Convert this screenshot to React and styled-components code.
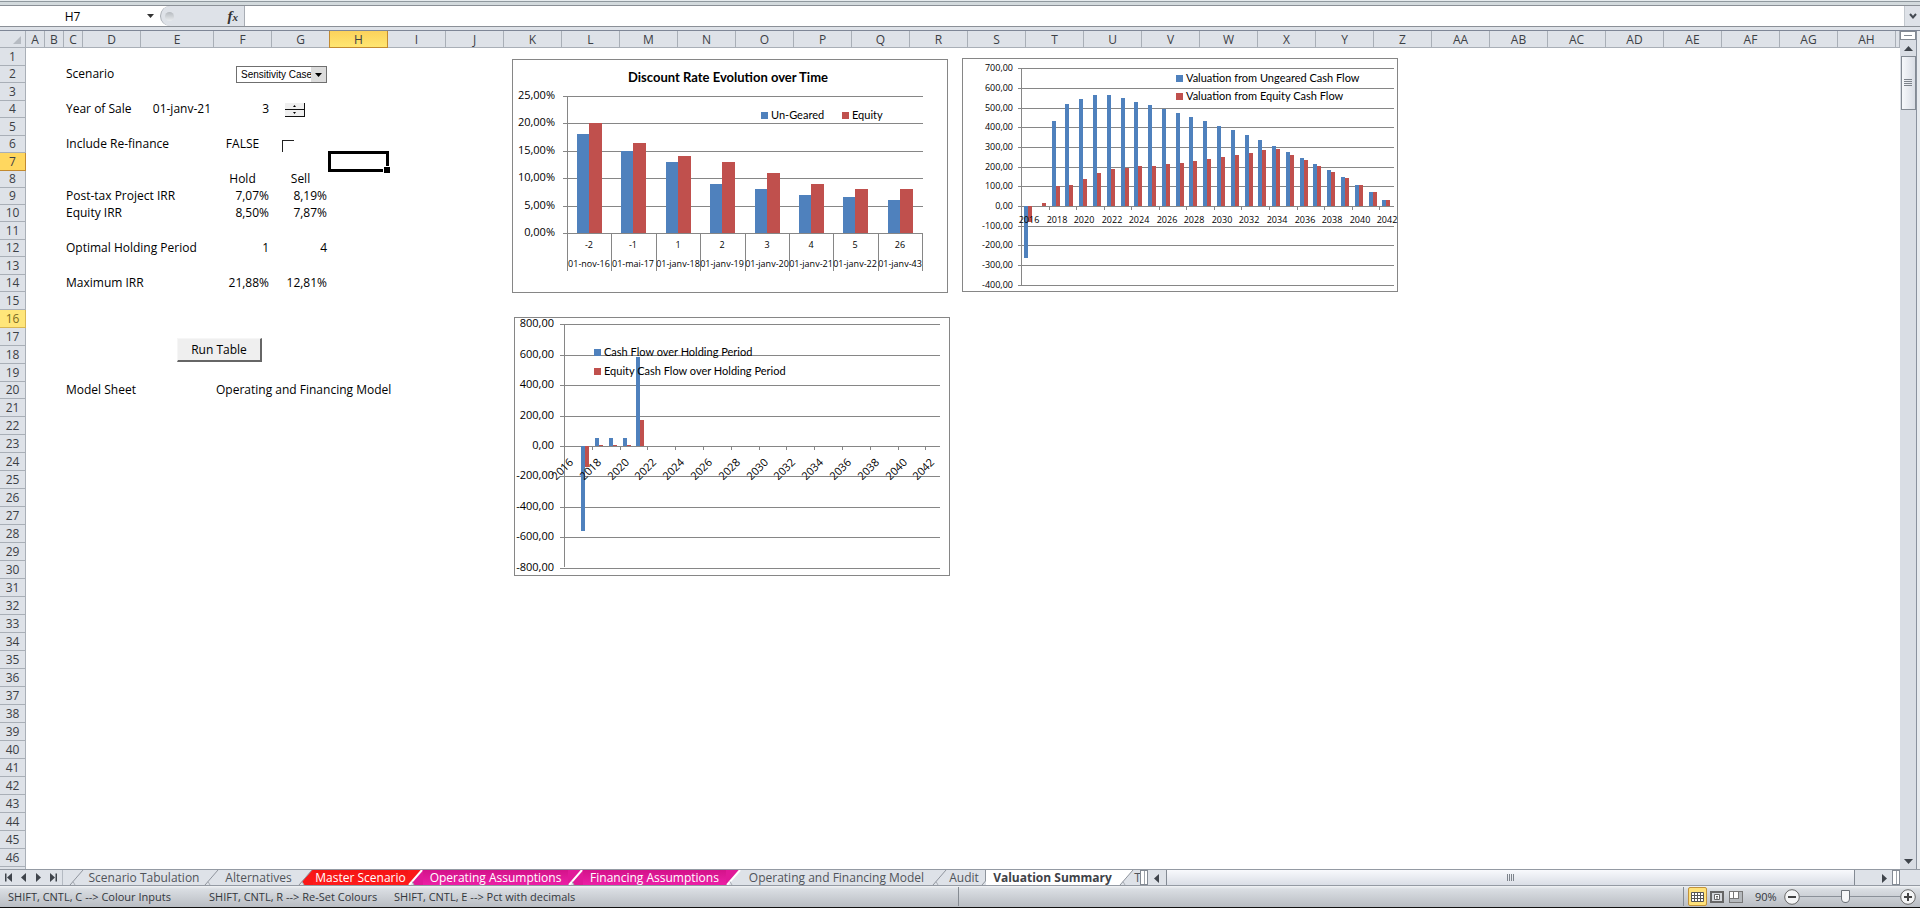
import styled, { createGlobalStyle, css } from "styled-components";

const GlobalStyle = createGlobalStyle`
  * {
    box-sizing: border-box;
  }

  body {
    margin: 0;
    background: #dee2e8;
    color: #000;
    font-family: "Open Sans", "Noto Sans", sans-serif;
    font-size: 12px;
  }

  button, input, select {
    font: inherit;
    color: inherit;
    margin: 0;
    padding: 0;
    border: 0;
    border-radius: 0;
    background: none;
  }
`;

const Page = styled.div`
  display: flex;
  flex-direction: column;
  height: 100vh;
  overflow: hidden;
`;

const RibbonEdge = styled.div`
  height: 5px;
  flex: none;
  background: linear-gradient(#e6ebee 0 1px, #8f989e 1px 2px, #d3dadd 2px);
`;

const FormulaBar = styled.div`
  display: flex;
  flex: none;
  height: 22px;
  border-top: 1px solid #8b9097;
  border-bottom: 1px solid #8b9097;
  background: #fff;
`;

const NameBox = styled.div`
  display: flex;
  align-items: center;
  width: 160px;
  padding-right: 5px;
`;

const NameInput = styled.input`
  flex: 1;
  min-width: 0;
  text-align: center;
  outline: none;
`;

const NameButton = styled.button`
  display: flex;
  align-items: center;
  justify-content: center;
  width: 10px;
`;

const FxArea = styled.div`
  display: flex;
  align-items: center;
  justify-content: space-between;
  width: 85px;
  padding: 0 6px 0 4px;
  border: 1px solid #a8adb4;
  border-width: 0 1px;
  border-radius: 11px 0 0 11px;
  background: #dee2e8;
`;

const Knob = styled.span`
  width: 9px;
  height: 9px;
  border-radius: 50%;
  background: linear-gradient(#b5babf, #e9ecef);
`;

const FxButton = styled.button`
  font-family: "Liberation Serif", serif;
  font-size: 15px;
  font-style: italic;
  font-weight: bold;
  line-height: 16px;
  color: #333;

  small {
    font-size: 11px;
  }
`;

const FormulaInput = styled.input`
  flex: 1;
  min-width: 0;
  padding: 0 4px;
  outline: none;
`;

const ExpandButton = styled.button`
  display: flex;
  align-items: center;
  justify-content: center;
  width: 16px;
  border-left: 1px solid #c3c8ce;
  background: #dee2e8;
`;

const Workspace = styled.div`
  display: flex;
  flex: 1;
  min-height: 0;
  margin-top: 3px;
  border-top: 1px solid #7e8696;
`;

const Viewport = styled.main`
  position: relative;
  flex: 1;
  min-width: 0;
  overflow: hidden;
  background: #fff;
`;

const Grid = styled.table`
  width: 100%;
  table-layout: fixed;
  border-collapse: separate;
  border-spacing: 0;
`;

const headerCell = css`
  padding: 0;
  font-weight: normal;
  color: #3c4045;
  background: #dee2e8;
  border: 0 solid #a9afb7;
`;

const ColHead = styled.th`
  ${headerCell}
  height: 17px;
  padding-top: 2px;
  line-height: 14px;
  border-width: 0 1px 1px 0;
  overflow: hidden;
  ${(p) =>
    p.$active &&
    css`
      background: linear-gradient(#fbd25b, #ffe671);
      border-color: #c28a30;
      box-shadow: -1px 0 #c28a30;
    `}
`;

const RowHead = styled.th`
  ${headerCell}
  line-height: 16px;
  border-width: 0 1px 1px 0;
  ${(p) =>
    p.$tone === "active" &&
    css`
      background: #ffd75f;
      border-color: #c28a30;
    `}
  ${(p) =>
    p.$tone === "hover" &&
    css`
      color: #7c6a22;
      background: #ffe67a;
      border-color: #d8b653;
    `}
`;

const Row = styled.tr`
  height: ${(p) => p.$height}px;
`;

const Cell = styled.td`
  padding: 0 3px 0 2px;
  line-height: 16px;
  vertical-align: top;
  white-space: nowrap;
  overflow: visible;
  text-align: ${(p) => p.$align || "left"};
`;

const ControlCell = styled(Cell)`
  padding: ${(p) => p.$pad};
  line-height: 0;
`;

const SelectWrap = styled.span`
  position: relative;
  display: inline-block;
  width: 91px;
  height: 17px;

  svg {
    position: absolute;
    top: 1px;
    right: 1px;
    pointer-events: none;
  }
`;

const ScenarioSelect = styled.select`
  appearance: none;
  width: 100%;
  height: 17px;
  padding-left: 4px;
  border: 1px solid #6f6f6f;
  background: #fff;
  font-family: "Liberation Sans", sans-serif;
  font-size: 10px;
  line-height: 14px;
`;

const Spinner = styled.span`
  display: inline-flex;
  flex-direction: column;
  width: 20px;
  border-right: 1px solid #111;
`;

const SpinButton = styled.button`
  display: flex;
  align-items: center;
  justify-content: center;
  height: 7px;
  border-bottom: 1px solid #111;
  background: #efefef;
`;

const Check = styled.input`
  appearance: none;
  width: 12px;
  height: 12px;
  border: solid #222;
  border-width: 1px 0 0 1px;
  background: #fff;
`;

// objects the user dropped on the sheet, above the cells
const Floating = styled.div`
  position: absolute;
  left: ${(p) => p.$x}px;
  top: ${(p) => p.$y}px;
  line-height: 0;
`;

const RunButton = styled.button`
  width: 85px;
  height: 24px;
  line-height: 20px;
  background: #efefef;
  border: 1px solid #f6f6f6;
  border-right: 2px solid #666;
  border-bottom: 2px solid #666;
`;

const Selection = styled.div`
  position: absolute;
  left: 328px;
  top: 120px;
  width: 61px;
  height: 21px;
  border: 3px solid #000;

  &::after {
    content: "";
    position: absolute;
    right: -4px;
    bottom: -4px;
    width: 6px;
    height: 6px;
    background: #000;
    border: solid #fff;
    border-width: 1px 0 0 1px;
  }
`;

const ChartText = styled.text`
  font-family: "Open Sans", sans-serif;
  font-size: ${(p) => p.$size || 11}px;
  text-anchor: ${(p) => p.$anchor || "start"};
  fill: #000;
`;

const ChartTitle = styled.text`
  font-family: Lato, sans-serif;
  font-size: 13px;
  font-weight: 700;
  text-anchor: middle;
`;

const LegendText = styled.text`
  font-family: Lato, sans-serif;
  font-size: 11px;
`;

const ScrollColumn = styled.div`
  display: flex;
  flex-direction: column;
  align-items: center;
  width: 20px;
  border-right: 3px solid #e8ebef;
  background: #d9dde4;
  box-shadow: inset -1px 0 #8b929e;
`;

const SplitHandle = styled.div`
  width: 16px;
  height: 9px;
  margin-right: 1px;
  border: 1px solid #838a93;
  background: linear-gradient(#fff 0 3px, #838a93 3px 4px, #fff 4px) center / 8px 100% no-repeat #fff;
`;

const ArrowButton = styled.button`
  display: flex;
  align-items: center;
  justify-content: center;
  width: 16px;
  height: 16px;
`;

const VerticalThumb = styled.div`
  display: flex;
  align-items: center;
  justify-content: center;
  width: 15px;
  height: 54px;
  margin-right: 1px;
  border: 1px solid #838a93;
  background: linear-gradient(90deg, #f6f8fb, #d9dde5);
`;

const Spacer = styled.div`
  flex: 1;
`;

const TabStrip = styled.div`
  display: flex;
  flex: none;
  height: 17px;
  border-top: 1px solid #949aa3;
  border-bottom: 1px solid #949aa3;
  background: #dee2e8;
`;

const SheetNav = styled.div`
  display: flex;
  align-items: center;
  justify-content: space-between;
  width: 63px;
  padding: 0 4px;
  border-right: 1px solid #b4bac2;
`;

const NavButton = styled.button`
  display: flex;
  justify-content: center;
  width: 11px;
`;

const Tabs = styled.div`
  display: flex;
  width: 1077px;
  padding-left: 6px;
  overflow: hidden;
`;

const Tab = styled.button`
  flex: none;
  width: ${(p) => p.$width}px;
  line-height: 15px;
  white-space: nowrap;
  color: ${(p) => (p.$fill ? "#fff" : "#50545a")};
  background: ${(p) => (p.$fill ? p.$fill : "#dee2e8")};
  ${(p) =>
    p.$current &&
    css`
      font-weight: bold;
      color: #3e4247;
      background: #fff;
    `}
`;

const SlantSvg = styled.svg`
  flex: none;
`;

const TabSplit = styled.div`
  width: 8px;
  border: 1px solid #838a93;
  background: linear-gradient(90deg, #fff 0 3px, #a0a5ac 3px 4px, #fff 4px);
`;

const HorizontalThumb = styled.div`
  display: flex;
  flex: 1;
  align-items: center;
  justify-content: center;
  margin-left: 2px;
  border: 1px solid #838a93;
  border-width: 0 1px;
  background: linear-gradient(#f8f9fc, #dadee6);
`;

const ScrollGap = styled.div`
  width: ${(p) => p.$width}px;
`;

const StatusBar = styled.footer`
  display: flex;
  flex: none;
  align-items: center;
  height: 22px;
  padding: 0 4px 0 8px;
  font-size: 11px;
  color: #33373c;
  background: linear-gradient(#f1f3f5, #dadee3 3px, #b9bdc3);
  border-bottom: 1px solid #111;
`;

const Hint = styled.span`
  width: ${(p) => p.$width}px;
  white-space: nowrap;
`;

const Divider = styled.span`
  align-self: stretch;
  width: 1px;
  margin: 1px 0;
  background: #858b92;
`;

const ViewButton = styled.button`
  display: flex;
  align-items: center;
  justify-content: center;
  width: 19px;
  height: 19px;
  ${(p) =>
    p.$on &&
    css`
      border: 1px solid #c2923b;
      border-radius: 2px;
      background: #ffe27a;
    `}
`;

const Zoom = styled.div`
  display: flex;
  align-items: center;
  padding-left: 10px;
`;

const ZoomLabel = styled.label`
  width: 29px;
  line-height: 16px;
`;

const RoundButton = styled.button`
  display: flex;
  line-height: 0;
`;

const ZoomSlider = styled.input`
  appearance: none;
  width: 100px;
  height: 16px;
  background: linear-gradient(#8b9199, #8b9199) center / 100% 1px no-repeat;

  &::-webkit-slider-thumb {
    appearance: none;
    width: 9px;
    height: 13px;
    border: 1px solid #6a7077;
    border-radius: 1px 1px 5px 5px;
    background: #f6f7f8;
  }
`;

const AXIS = "#868686";
const BLUE = "#4f81bd";
const RED = "#c0504d";

const COLUMNS = [
  ["A", 19], ["B", 19], ["C", 19], ["D", 58], ["E", 73],
  ..."FGHIJKLMNOPQRSTUVWXYZ".split("").map((c) => [c, 58]),
  ..."ABCDEFGH".split("").map((c) => ["A" + c, 58]),
];

const SHORT_ROWS = [2, 4, 6, 8, 9, 10, 12, 14, 20];

const label = (text) => <Cell colSpan={3}>{text}</Cell>;
const right = (text) => <Cell $align="right">{text}</Cell>;
const center = (text) => <Cell $align="center">{text}</Cell>;
const blank = <Cell colSpan={2} />;

function numbers(text, f, g) {
  return (
    <>
      {blank}
      {label(text)}
      {f}
      {g}
    </>
  );
}

const ROWS = {
  2: (
    <>
      {blank}
      {label("Scenario")}
      <ControlCell colSpan={2} $align="right" $pad="0 3px 0 0">
        <SelectWrap>
          <ScenarioSelect aria-label="Scenario" defaultValue="s">
            <option value="s">Sensitivity Case</option>
          </ScenarioSelect>
          <svg width="15" height="15">
            <rect width="15" height="15" fill="#dcdcdc" />
            <path d="M4 6h7L7.500 10z" fill="#000" />
          </svg>
        </SelectWrap>
      </ControlCell>
    </>
  ),
  4: (
    <>
      {blank}
      <Cell colSpan={2}>Year of Sale</Cell>
      {right("01-janv-21")}
      {right("3")}
      <ControlCell $pad="2px 0 0 13px">
        <Spinner>
          <SpinButton aria-label="Later year"><svg width="3" height="2"><path d="M0 2L1.500 0L3 2z" /></svg></SpinButton>
          <SpinButton aria-label="Earlier year"><svg width="3" height="2"><path d="M0 0h3L1.500 2z" /></svg></SpinButton>
        </Spinner>
      </ControlCell>
    </>
  ),
  6: numbers(
    "Include Re-finance",
    center("FALSE"),
    <ControlCell $pad="4px 0 0 10px">
      <Check type="checkbox" aria-label="Include Re-finance" />
    </ControlCell>
  ),
  8: numbers("", center("Hold"), center("Sell")),
  9: numbers("Post-tax Project IRR", right("7,07%"), right("8,19%")),
  10: numbers("Equity IRR", right("8,50%"), right("7,87%")),
  12: numbers("Optimal Holding Period", right("1"), right("4")),
  14: numbers("Maximum IRR", right("21,88%"), right("12,81%")),
  20: (
    <>
      {blank}
      {label("Model Sheet")}
      <Cell colSpan={3}>Operating and Financing Model</Cell>
    </>
  ),
};

function Legend({ x, y, color, children }) {
  return (
    <>
      <rect x={x} y={y - 7} width="7" height="7" fill={color} />
      <LegendText x={x + 10} y={y}>{children}</LegendText>
    </>
  );
}

function DiscountChart() {
  const ungeared = [18, 15, 13, 9, 8, 7, 6.5, 6];
  const equity = [20, 16.5, 14, 13, 11, 9, 8, 8];
  const periods = ["-2", "-1", "1", "2", "3", "4", "5", "26"];
  const dates = ["01-nov-16", "01-mai-17", "01-janv-18", "01-janv-19", "01-janv-20", "01-janv-21", "01-janv-22", "01-janv-43"];
  const left = 55;
  const step = 44.4;
  const y = (v) => Math.round(174 - v * 5.48);
  return (
    <svg width="436" height="234" role="img" aria-label="Discount Rate Evolution over Time" shapeRendering="crispEdges">
      <rect x="0.5" y="0.5" width="435" height="233" fill="#fff" stroke={AXIS} />
      <ChartTitle x="216" y="23">Discount Rate Evolution over Time</ChartTitle>
      {[0, 5, 10, 15, 20, 25].map((v) => (
        <g key={v}>
          <path d={`M${left - 4} ${y(v) + 0.5}H411`} stroke={AXIS} />
          <ChartText x="43" y={y(v) + 3} $size={11} $anchor="end">{v},00%</ChartText>
        </g>
      ))}
      {periods.map((p, i) => {
        const x = Math.round(left + i * step);
        return (
          <g key={p}>
            <rect x={x + 10} y={y(ungeared[i])} width="12" height={174 - y(ungeared[i])} fill={BLUE} />
            <rect x={x + 22} y={y(equity[i])} width="13" height={174 - y(equity[i])} fill={RED} />
            <path d={`M${x + 0.5} 174V212`} stroke={AXIS} />
            <ChartText x={x + 22} y="189" $size={9} $anchor="middle">{p}</ChartText>
            <ChartText x={x + 22} y="208" $size={9} $anchor="middle">{dates[i]}</ChartText>
          </g>
        );
      })}
      <path d={`M${left + 0.5} 37V174M410.500 174V212`} stroke={AXIS} />
      <Legend x={249} y={60} color={BLUE}>Un-Geared</Legend>
      <Legend x={330} y={60} color={RED}>Equity</Legend>
    </svg>
  );
}

// paired bars for 2016-2042, shared by both cash charts
function YearBars({ left, step, zero, scale, first, second }) {
  const bar = (v, x, color) => {
    const h = Math.round(Math.abs(v) * scale);
    return <rect x={Math.round(x)} y={v < 0 ? zero : zero - h} width="4" height={h} fill={color} />;
  };
  return first.map((v, i) => (
    <g key={i}>
      {bar(v, left + i * step + 2.4, BLUE)}
      {bar(second[i] || 0, left + i * step + 6.4, RED)}
    </g>
  ));
}

const YEARS = Array.from({ length: 14 }, (_, i) => 2016 + i * 2);

function ValuationChart() {
  const ungeared = [-262, 0, 433, 519, 545, 565, 565, 550, 530, 514, 494, 474, 453, 433, 408, 387, 362, 337, 306, 276, 245, 215, 184, 149, 108, 73, 32];
  const equity = [-83, 17, 100, 108, 139, 169, 190, 193, 203, 205, 215, 220, 230, 240, 250, 260, 271, 286, 291, 260, 235, 205, 174, 144, 108, 73, 32];
  const ticks = [7, 6, 5, 4, 3, 2, 1, 0, -1, -2, -3, -4];
  return (
    <svg width="436" height="234" role="img" aria-label="Valuation" shapeRendering="crispEdges">
      <rect x="0.5" y="0.5" width="435" height="233" fill="#fff" stroke={AXIS} />
      {ticks.map((t) => {
        const y = Math.round(148 - t * 19.7);
        return (
          <g key={t}>
            <path d={`M56 ${y + 0.5}H432`} stroke={AXIS} />
            <ChartText x="51" y={y + 3} $size={9} $anchor="end">{t ? t + "00,00" : "0,00"}</ChartText>
          </g>
        );
      })}
      <path d="M59.500 10V227" stroke={AXIS} />
      <YearBars left={59.7} step={13.78} zero={148} scale={0.197} first={ungeared} second={equity} />
      {YEARS.map((year, i) => (
        <g key={year}>
          <path d={`M${Math.round(60 + i * 27.56) - 0.5} 148v4`} stroke={AXIS} />
          <ChartText x={Math.round(67 + i * 27.56)} y="165" $size={9} $anchor="middle">{year}</ChartText>
        </g>
      ))}
      <Legend x={214} y={24} color={BLUE}>Valuation from Ungeared Cash Flow</Legend>
      <Legend x={214} y={42} color={RED}>Valuation from Equity Cash Flow</Legend>
    </svg>
  );
}

function CashFlowChart() {
  const cash = [0, -557, 53, 53, 53, 585];
  const equity = [0, -140, 8, 8, 8, 171];
  const ticks = [8, 6, 4, 2, 0, -2, -4, -6, -8];
  return (
    <svg width="436" height="259" role="img" aria-label="Cash flow over holding period" shapeRendering="crispEdges">
      <rect x="0.5" y="0.5" width="435" height="258" fill="#fff" stroke={AXIS} />
      {ticks.map((t) => {
        const y = Math.round(129 - t * 15.2);
        return (
          <g key={t}>
            <path d={`M46 ${y + 0.5}H426`} stroke={AXIS} />
            <ChartText x="40" y={y + 3} $size={11} $anchor="end">{t ? t + "00,00" : "0,00"}</ChartText>
          </g>
        );
      })}
      <path d="M50.500 7V250" stroke={AXIS} />
      <YearBars left={50.5} step={13.9} zero={129} scale={0.152} first={cash} second={equity} />
      {YEARS.map((year, i) => {
        const x = Math.round(51 + i * 27.8);
        return (
          <g key={year}>
            <path d={`M${x - 0.5} 129v4`} stroke={AXIS} />
            <ChartText transform={`translate(${x + 9} 146) rotate(-45)`} $size={11} $anchor="end">{year}</ChartText>
          </g>
        );
      })}
      <Legend x={80} y={39} color={BLUE}>Cash Flow over Holding Period</Legend>
      <Legend x={80} y={58} color={RED}>Equity Cash Flow over Holding Period</Legend>
    </svg>
  );
}

function Arrow({ dir, bar }) {
  const turn = { up: 0, right: 90, down: 180, left: 270 }[dir];
  return (
    <svg width="11" height="11" viewBox="0 0 11 11">
      <g transform={`rotate(${turn} 5.500 5.500)`} fill="#3f444b">
        <path d="M1 8L5.500 3L10 8z" />
        {bar && <rect x="1.500" y="1" width="8" height="1.500" />}
      </g>
    </svg>
  );
}

const PINK = "linear-gradient(#d3138a, #ec1fa6)";
const SCARLET = "linear-gradient(#f41414, #ff1c1c)";

const TABS = [
  { name: "Scenario Tabulation", width: 120 },
  { name: "Alternatives", width: 79 },
  { name: "Master Scenario", width: 95, fill: SCARLET, flat: "#fa1818" },
  { name: "Operating Assumptions", width: 145, fill: PINK, flat: "#e01998" },
  { name: "Financing Assumptions", width: 143, fill: PINK, flat: "#e01998" },
  { name: "Operating and Financing Model", width: 191 },
  { name: "Audit", width: 34 },
  { name: "Valuation Summary", width: 133, flat: "#fff", current: true },
];

function Slant({ from = "#dee2e8", to = "#dee2e8" }) {
  const tinted = from !== "#dee2e8" && from !== "#fff";
  // the open sheet's tab lies in front, so its left edge is upright
  if (to === "#fff") {
    return (
      <SlantSvg width="5" height="15" viewBox="0 0 5 15" aria-hidden="true">
        <path d="M4.500 0V11L1 15" fill="none" stroke="#8f959d" />
      </SlantSvg>
    );
  }
  return (
    <SlantSvg width="15" height="15" viewBox="0 0 15 15" aria-hidden="true">
      <path d="M0 0H14L1 15H0z" fill={from} />
      <path d="M15 0H14L1 15H15z" fill={to} />
      <path d="M4 11.500L6 15H1z" fill="#dee2e8" />
      <path d="M14 0L1 15" stroke={tinted ? "#fff" : "#8f959d"} strokeWidth={tinted ? 2 : 1} />
      <path d="M4 11.500L6 15" stroke="#a9aeb5" />
    </SlantSvg>
  );
}

export default function App() {
  return (
    <Page>
      <GlobalStyle />
      <RibbonEdge />
      <FormulaBar>
        <NameBox>
          <NameInput aria-label="Name box" defaultValue="H7" />
          <NameButton aria-label="Names">
            <svg width="7" height="4"><path d="M0 0h7L3.500 4z" fill="#333" /></svg>
          </NameButton>
        </NameBox>
        <FxArea>
          <Knob />
          <FxButton aria-label="Insert function">f<small>x</small></FxButton>
        </FxArea>
        <FormulaInput aria-label="Formula" />
        <ExpandButton aria-label="Expand formula bar">
          <svg width="8" height="7"><path d="M1 1L4 4.500L7 1" fill="none" stroke="#444a52" strokeWidth="2" /></svg>
        </ExpandButton>
      </FormulaBar>

      <Workspace>
        <Viewport>
          <Grid>
            <colgroup>
              <col style={{ width: 26 }} />
              {COLUMNS.map(([name, width]) => <col key={name} style={{ width }} />)}
              <col />
            </colgroup>
            <thead>
              <tr>
                <ColHead>
                  <svg width="26" height="10" display="block"><path d="M21 1V9H13z" fill="#b6bbc2" /></svg>
                </ColHead>
                {COLUMNS.map(([name]) => <ColHead key={name} $active={name === "H"}>{name}</ColHead>)}
                <ColHead />
              </tr>
            </thead>
            <tbody>
              {Array.from({ length: 46 }, (_, i) => i + 1).map((n) => (
                <Row key={n} $height={SHORT_ROWS.includes(n) ? 17 : 18}>
                  <RowHead $tone={n === 7 ? "active" : n === 16 ? "hover" : undefined}>{n}</RowHead>
                  {ROWS[n]}
                </Row>
              ))}
              <Row $height={18}>
                <RowHead />
              </Row>
            </tbody>
          </Grid>
          <Selection />
          <Floating $x={177} $y={307}><RunButton>Run Table</RunButton></Floating>
          <Floating $x={512} $y={28}><DiscountChart /></Floating>
          <Floating $x={962} $y={27}><ValuationChart /></Floating>
          <Floating $x={514} $y={286}><CashFlowChart /></Floating>
        </Viewport>
        <ScrollColumn>
          <SplitHandle />
          <ArrowButton aria-label="Scroll up"><Arrow dir="up" /></ArrowButton>
          <VerticalThumb>
            <svg width="8" height="8"><path d="M0 .5h8M0 2.500h8M0 4.500h8M0 6.500h8" stroke="#7d838b" /></svg>
          </VerticalThumb>
          <Spacer />
          <ArrowButton aria-label="Scroll down"><Arrow dir="down" /></ArrowButton>
        </ScrollColumn>
      </Workspace>

      <TabStrip>
        <SheetNav>
          <NavButton aria-label="First sheet"><Arrow dir="left" bar /></NavButton>
          <NavButton aria-label="Previous sheet"><Arrow dir="left" /></NavButton>
          <NavButton aria-label="Next sheet"><Arrow dir="right" /></NavButton>
          <NavButton aria-label="Last sheet"><Arrow dir="right" bar /></NavButton>
        </SheetNav>
        <Tabs>
          {TABS.map((tab, i) => [
            <Slant key={"s" + i} from={i ? TABS[i - 1].flat : undefined} to={tab.flat} />,
            <Tab key={tab.name} $width={tab.width} $fill={tab.fill} $current={tab.current}>{tab.name}</Tab>,
          ])}
          <Slant from="#fff" />
          <Tab $width={7}>T</Tab>
        </Tabs>
        <TabSplit />
        <ArrowButton aria-label="Scroll left"><Arrow dir="left" /></ArrowButton>
        <HorizontalThumb>
          <svg width="8" height="7"><path d="M.5 0v7M2.500 0v7M4.500 0v7M6.500 0v7" stroke="#7d838b" /></svg>
        </HorizontalThumb>
        <ScrollGap $width={21} />
        <ArrowButton aria-label="Scroll right"><Arrow dir="right" /></ArrowButton>
        <TabSplit />
        <ScrollGap $width={20} />
      </TabStrip>

      <StatusBar>
        <Hint $width={201}>SHIFT, CNTL, C --&gt; Colour Inputs</Hint>
        <Hint $width={185}>SHIFT, CNTL, R --&gt; Re-Set Colours</Hint>
        <Hint $width={564}>SHIFT, CNTL, E --&gt; Pct with decimals</Hint>
        <Divider />
        <Spacer />
        <Divider />
        <ScrollGap $width={4} />
        <ViewButton $on aria-label="Normal view">
          <svg width="13" height="10"><path d="M.5 .5h12v9H.5zM.5 3.500h12M.5 6.500h12M3.500 0v10M6.500 0v10M9.500 0v10" fill="#fff" stroke="#555" /></svg>
        </ViewButton>
        <ViewButton aria-label="Page layout">
          <svg width="14" height="12"><path d="M1 1h12v10H1z" fill="#d5d8dc" stroke="#666" strokeWidth="2" /><path d="M4.500 3.500h5v5h-5zM6 5.500h2M6 7h2" fill="#fff" stroke="#666" /></svg>
        </ViewButton>
        <ViewButton aria-label="Page break preview">
          <svg width="14" height="12"><path d="M0 0h14v12H0z" fill="#777" /><path d="M1 1h3v6H1zM5 1h4v6H5z" fill="#fff" /><path d="M1 8h12v3H1zM10 1h3v7h-3z" fill="#b5b9bd" /></svg>
        </ViewButton>
        <Zoom>
          <ZoomLabel htmlFor="zoom">90%</ZoomLabel>
          <RoundButton aria-label="Zoom out">
            <svg width="16" height="16"><circle cx="8" cy="8" r="7.300" fill="#f4f5f6" stroke="#666" /><path d="M4 8h8" stroke="#444" strokeWidth="2" /></svg>
          </RoundButton>
          <ZoomSlider id="zoom" type="range" min="0" max="100" defaultValue="45" />
          <RoundButton aria-label="Zoom in">
            <svg width="16" height="16"><circle cx="8" cy="8" r="7.300" fill="#f4f5f6" stroke="#666" /><path d="M4 8h8M8 4v8" stroke="#444" strokeWidth="2" /></svg>
          </RoundButton>
        </Zoom>
      </StatusBar>
    </Page>
  );
}
